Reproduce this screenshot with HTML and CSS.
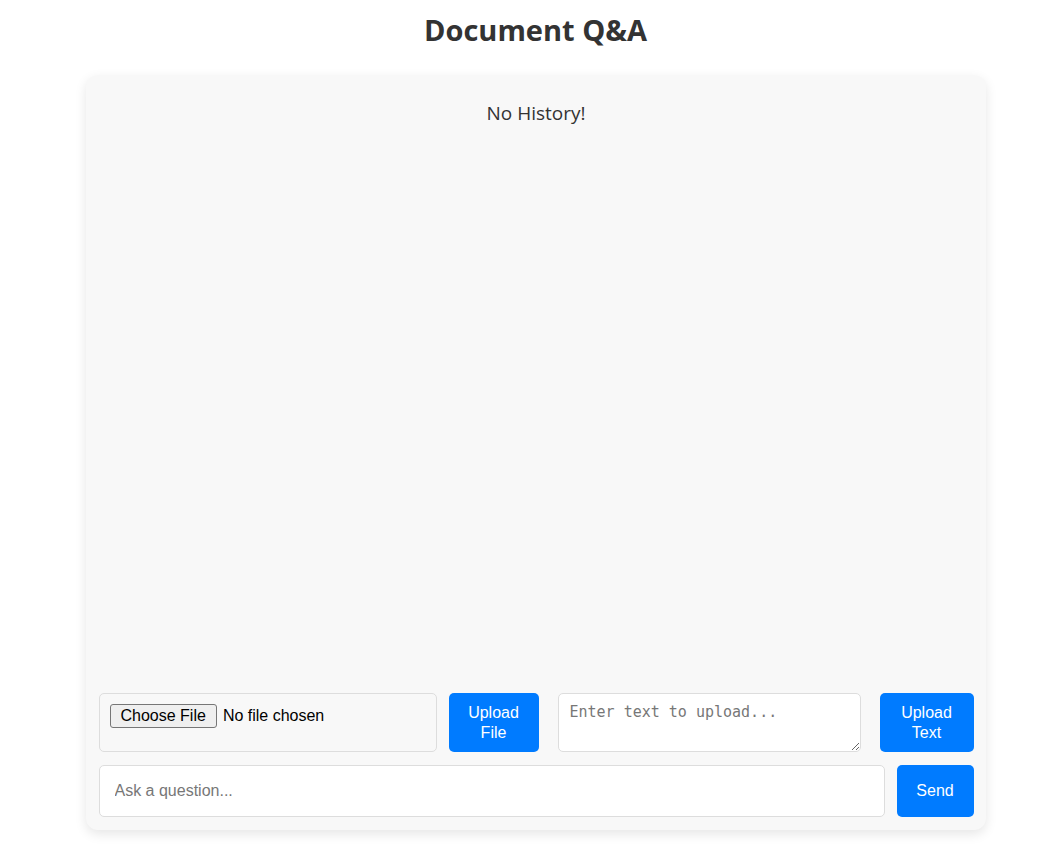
FILE: index.html
```html
<!DOCTYPE html>
<html lang="en">
<head>
<meta charset="utf-8">
<title>Document Q&amp;A</title>
<link rel="stylesheet" href="styles.css">
</head>
<body>
  <div class="page">
    <h1 class="title">Document Q&amp;A</h1>
    <div class="card">
      <div class="history">
        <p class="empty">No History!</p>
      </div>
      <div class="upload-row">
        <div class="file-box"><input type="file" class="file-input"></div>
        <button class="btn upload-file">Upload File</button>
        <textarea class="text-upload" placeholder="Enter text to upload..."></textarea>
        <button class="btn upload-text">Upload Text</button>
      </div>
      <div class="ask-row">
        <input type="text" class="ask" placeholder="Ask a question...">
        <button class="btn send">Send</button>
      </div>
    </div>
  </div>
</body>
</html>
```

FILE: styles.css
```css
* { box-sizing: border-box; }
html, body { margin: 0; padding: 0; background: #fff; }
body { font-family: "Open Sans", "Noto Sans", sans-serif; color: #333; }
.page {
  padding-left: 12px;
  padding-bottom: 20px;
  display: flex;
  flex-direction: column;
  align-items: center;
}
.title {
  margin: 0;
  padding-top: 10px;
  height: 75px;
  line-height: 40px;
  font-size: 29px;
  font-weight: 700;
  color: #333;
}
.card {
  width: 900px;
  height: 755px;
  flex: none;
  background: #f8f8f8;
  border-radius: 12px;
  box-shadow: 0 4px 12px rgba(0,0,0,0.1);
  padding: 13px 12px 13px 13px;
  display: flex;
  flex-direction: column;
}
.history { flex: 1; min-height: 0; }
.empty {
  margin: 12px 0 0;
  text-align: center;
  font-size: 19px;
  color: #333;
}
.upload-row {
  display: flex;
  height: 59px;
  flex: none;
}
.file-box {
  width: 338px;
  flex: none;
  border: 1px solid #ddd;
  border-radius: 5px;
  background: #f8f8f8;
  padding: 10px;
}
.file-input {
  font-family: "Liberation Sans", Arial, sans-serif;
  font-size: 16px;
  color: #000;
}
.file-input::file-selector-button {
  font-family: "Liberation Sans", Arial, sans-serif;
  font-size: 16px;
  padding: 2px 10px;
  margin-right: 6px;
  border: 1px solid #767676;
  border-radius: 3px;
  background: #efefef;
  color: #000;
}
.btn {
  flex: none;
  border: none;
  border-radius: 5px;
  background: #007bff;
  color: #fff;
  font-family: "Liberation Sans", Arial, sans-serif;
  font-size: 16px;
  line-height: 20px;
  padding: 0 18px;
  cursor: pointer;
}
.upload-file { width: 90px; margin-left: 12px; }
.upload-text { width: 94px; margin-left: 19px; }
.text-upload {
  flex: none;
  margin-left: 19px;
  border: 1px solid #ddd;
  border-radius: 5px;
  background: #fff;
  padding: 9px 11px;
  font-family: "DejaVu Sans Mono", monospace;
  font-size: 15px;
  resize: both;
  height: 59px;
  width: 303px;
}
.text-upload::placeholder { color: #777; }
.ask-row {
  display: flex;
  gap: 12px;
  margin-top: 13px;
  height: 52px;
  flex: none;
}
.ask {
  flex: 1;
  border: 1px solid #ddd;
  border-radius: 5px;
  background: #fff;
  padding: 0 15px;
  font-family: "Liberation Sans", Arial, sans-serif;
  font-size: 16px;
}
.ask::placeholder { color: #777; }
.send { width: 77px; padding: 0; }
```
